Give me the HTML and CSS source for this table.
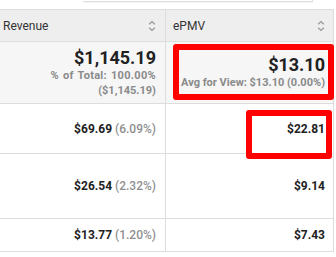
FILE: index.html
```html
<!DOCTYPE html>
<html>
<head>
<meta charset="utf-8">
<link rel="stylesheet" href="styles.css">
</head>
<body>
<div class="page">
  <div class="topbar"><div class="topbox"></div></div>
  <div class="table">
    <div class="cell head first"><span>Revenue</span>
      <svg class="sort" width="8" height="12" viewBox="0 0 8 12"><path d="M1.2 4.2 L4 1.6 L6.8 4.2 M1.2 7.8 L4 10.4 L6.8 7.8" fill="none" stroke="#9a9a9a" stroke-width="1.4"/></svg>
    </div>
    <div class="cell head second"><span>ePMV</span>
      <svg class="sort" width="8" height="12" viewBox="0 0 8 12"><path d="M1.2 4.2 L4 1.6 L6.8 4.2 M1.2 7.8 L4 10.4 L6.8 7.8" fill="none" stroke="#9a9a9a" stroke-width="1.4"/></svg>
    </div>

    <div class="cell sum first">
      <div class="big">$1,145.19</div>
      <div class="small wide">% of Total: 100.00%</div>
      <div class="small">($1,145.19)</div>
    </div>
    <div class="cell sum second">
      <div class="big">$13.10</div>
      <div class="small">Avg for View: $13.10 (0.00%)</div>
    </div>

    <div class="cell row r1 first"><b>$69.69</b><span class="pct">(6.09%)</span></div>
    <div class="cell row r1 second"><b>$22.81</b></div>

    <div class="cell row r2 first"><b>$26.54</b><span class="pct">(2.32%)</span></div>
    <div class="cell row r2 second"><b>$9.14</b></div>

    <div class="cell row r3 first"><b>$13.77</b><span class="pct">(1.20%)</span></div>
    <div class="cell row r3 second"><b>$7.43</b></div>
  </div>
  <div class="mark mark-sum"></div>
  <div class="mark mark-row"></div>
</div>
</body>
</html>
```
FILE: styles.css
```css
html, body {
  margin: 0;
  padding: 0;
  background: #ffffff;
}
body {
  font-family: Roboto, "Liberation Sans", Arial, sans-serif;
  color: #222222;
}
.page {
  position: relative;
  width: 336px;
  height: 257px;
  overflow: hidden;
}
.topbar {
  height: 9px;
}
.topbox {
  margin-left: 83px;
  width: 229px;
  height: 1px;
  border-bottom: 1px solid #dedede;
  border-right: 1px solid #dedede;
  box-shadow: 0 1px 1px rgba(0,0,0,0.04);
}
.table {
  width: 334px;
  display: grid;
  grid-template-columns: 166px 168px;
  border-top: 1px solid #dddddd;
}
.cell {
  box-sizing: border-box;
  border-right: 1px solid #dddddd;
  border-bottom: 1px solid #dddddd;
}
.head {
  height: 32px;
  background: #eeeeee;
  display: flex;
  align-items: center;
  justify-content: space-between;
  font-size: 12px;
  color: #333333;
}
.head.first {
  padding: 0 9px 0 3px;
}
.head.second {
  padding: 0 8px 0 7px;
}
.sort {
  display: block;
}
.sum {
  height: 62px;
  background: #f6f6f6;
  display: flex;
  flex-direction: column;
  align-items: flex-end;
  justify-content: center;
}
.first {
  padding-right: 9px;
}
.second {
  padding-right: 8px;
}
.big {
  font-size: 18px;
  font-weight: 700;
  line-height: 20px;
  color: #212121;
}
.small {
  font-size: 11px;
  font-weight: 700;
  line-height: 15px;
  color: #8a8a8a;
}
.small.wide {
  word-spacing: 1px;
  letter-spacing: 0.3px;
}
.row {
  display: flex;
  align-items: center;
  justify-content: flex-end;
  font-size: 12px;
  background: #ffffff;
}
.row b {
  font-weight: 700;
  color: #222222;
}
.pct {
  margin-left: 3px;
  color: #8f8f8f;
  font-weight: 500;
}
.r1 { height: 50px; }
.r2 { height: 65px; }
.r3 { height: 33px; }
.mark {
  position: absolute;
  box-sizing: border-box;
  border: 6px solid #ff0000;
  border-radius: 3px;
}
.mark-sum {
  left: 173px;
  top: 44px;
  width: 161px;
  height: 56px;
}
.mark-row {
  left: 246px;
  top: 110px;
  width: 86px;
  height: 49px;
}
```
